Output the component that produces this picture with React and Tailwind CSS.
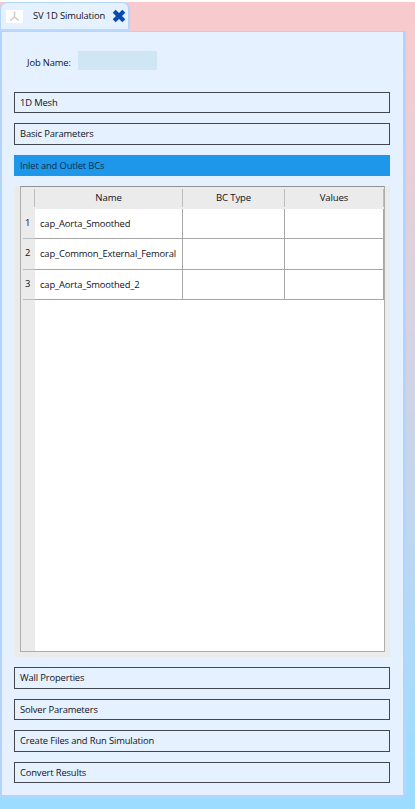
import React from 'react';

function Section({ label, className }) {
  return (
    <div className={`flex shrink-0 items-center border border-[#45474f] pl-[5px] ${className}`}>{label}</div>
  );
}

const rows = [
  { name: 'cap_Aorta_Smoothed', height: 'h-[30px]' },
  { name: 'cap_Common_External_Femoral', height: 'h-[31px]' },
  { name: 'cap_Aorta_Smoothed_2', height: 'h-[30px]' },
];

function BoundaryTable() {
  return (
    <div className="mt-[10px] h-[471px] shrink-0 bg-[#ebebeb] pr-[5px] pb-[5px] pl-[6px]">
      <div className="flex h-[466px] flex-col border border-[#adadad] border-t-[#929292]">
        <div className="flex h-[22px] shrink-0 items-stretch bg-[#ebebeb] pt-[2px] pb-[2px] text-center text-[9.6px] leading-[18px]">
          <div className="w-[14px] border-r border-[#bdbdbd]" />
          <div className="w-[148px] border-r border-[#bdbdbd]">Name</div>
          <div className="w-[102px] border-r border-[#bdbdbd]">BC Type</div>
          <div className="w-[99px] border-r border-[#bdbdbd]">Values</div>
        </div>
        {rows.map((row, i) => (
          <div key={row.name} className={`flex shrink-0 bg-[#ebebeb] ${row.height}`}>
            <div className="ml-[2px] w-[12px] border-b border-[#bdbdbd] pl-[2px] font-medium leading-[28px]">{i + 1}</div>
            <div className="w-[148px] border-r border-b border-[#a6a6a6] bg-white pl-[5px] leading-[30px]">{row.name}</div>
            <div className="w-[102px] border-r border-b border-[#a6a6a6] bg-white" />
            <div className="w-[99px] border-r border-b border-[#a6a6a6] bg-white" />
          </div>
        ))}
        <div className="flex flex-1">
          <div className="w-[14px] bg-[#ebebeb]" />
          <div className="flex-1 bg-white" />
        </div>
      </div>
    </div>
  );
}

export default function App() {
  return (
    <div className="h-[809px] w-[415px] overflow-hidden bg-white pt-[2px] font-['Open_Sans','Noto_Sans',sans-serif] text-[9.4px] tracking-[-0.14px] whitespace-nowrap text-[#101218]">
      <div className="flex h-[807px] flex-col bg-linear-to-b from-[#f7cbce] from-[3%] to-[#9bdcff] to-[96%]">
        <div className="flex h-[27px] w-[130px] shrink-0 items-center rounded-t-[7px] border-t border-r-2 border-l border-[#b1d5ff] bg-[#e5f1ff]">
          <div className="ml-[5px] flex h-[13px] w-[17px] items-center justify-center bg-white">
            <svg width="11" height="11" viewBox="0 0 11 11" fill="none" stroke="#cccccc" strokeWidth="1.5">
              <path d="M5.5 0.5V6L1.2 9.5M5.5 6L9.8 9.5" />
            </svg>
          </div>
          <span className="mt-px ml-[10px]">SV 1D Simulation</span>
          <svg className="mr-[2px] ml-auto" width="14" height="14" viewBox="0 0 14 14" stroke="#074bb2" strokeWidth="4.2">
            <path d="M2.2 2.2L11.8 11.8M11.8 2.2L2.2 11.8" />
          </svg>
        </div>
        <div className="h-[2px] w-[130px] shrink-0 bg-[#b9dafe]" />
        <div className="flex h-[767px] w-[406px] shrink-0 flex-col border-t border-r-[3px] border-b-[3px] border-l-2 border-[#b1d5ff] bg-[#e5f1ff] pr-[13px] pl-[12px]">
          <div className="mt-[19px] flex h-[19px] shrink-0 items-center pl-[13px]">
            <span className="mt-[5px] w-[51px]">Job Name:</span>
            <div className="h-[19px] w-[79px] bg-[#cfe6f4]" />
          </div>
          <Section label="1D Mesh" className="mt-[22px] h-[21px] pt-px" />
          <Section label="Basic Parameters" className="mt-[10px] h-[22px]" />
          <div className="mt-[10px] flex h-[21px] shrink-0 items-center bg-[#1e97eb] pt-px pl-[6px] text-[#08304f]">Inlet and Outlet BCs</div>
          <BoundaryTable />
          <Section label="Wall Properties" className="mt-[10px] h-[22px]" />
          <Section label="Solver Parameters" className="mt-[10px] h-[21px] pt-px" />
          <Section label="Create Files and Run Simulation" className="mt-[10px] h-[22px]" />
          <Section label="Convert Results" className="mt-[10px] h-[21px] pt-px" />
        </div>
      </div>
    </div>
  );
}
